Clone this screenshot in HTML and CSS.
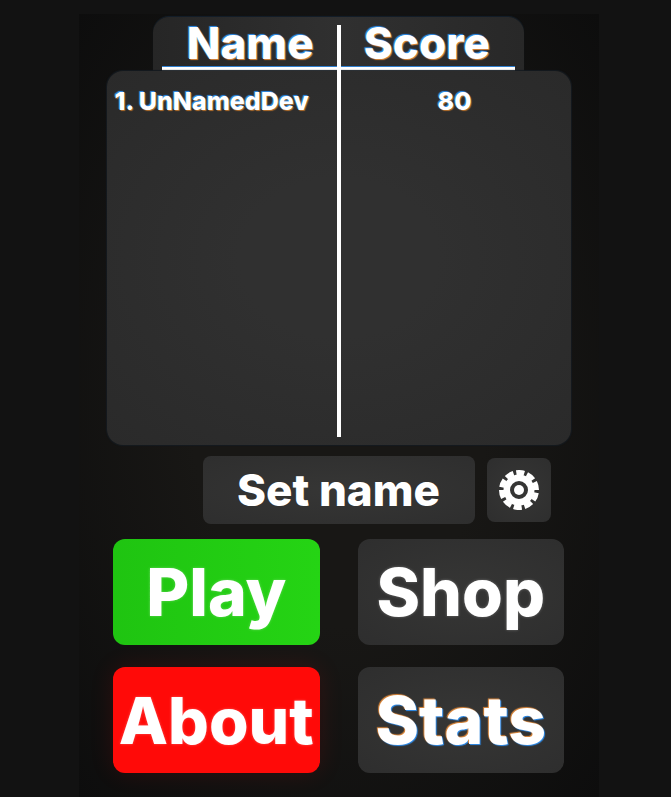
FILE: index.html
```
<!DOCTYPE html>
<html lang="en">
<head>
  <meta charset="UTF-8">
  <meta name="viewport" content="width=device-width, initial-scale=1.0">
  <title>Main Menu</title>
  <link rel="stylesheet" href="styles.css">
</head>
<body>
  <main class="stage">
    <div class="scoreboard">
      <table class="score-table">
        <thead>
          <tr>
            <th scope="col">Name</th>
            <th scope="col">Score</th>
          </tr>
        </thead>
        <tbody>
          <tr>
            <td>1. UnNamedDev</td>
            <td>80</td>
          </tr>
        </tbody>
      </table>
    </div>
    <div class="name-bar">
      <button class="btn btn-name" type="button">Set name</button>
      <button class="btn btn-settings" type="button" aria-label="Settings">
        <svg viewBox="-20 -20 40 40" width="40" height="40" fill="none" stroke="#fff">
          <circle r="17.5" stroke-width="5" pathLength="100" stroke-dasharray="7.4 2.6" transform="rotate(9)"/>
          <circle r="12.25" stroke-width="6.5"/>
          <circle r="5" fill="#fff" stroke="none"/>
        </svg>
      </button>
    </div>
    <div class="menu">
      <button class="btn btn-play" type="button">Play</button>
      <button class="btn btn-shop" type="button">Shop</button>
      <button class="btn btn-about" type="button">About</button>
      <button class="btn btn-stats" type="button">Stats</button>
    </div>
  </main>
</body>
</html>
```
FILE: styles.css
```
body {
  font-family: Inter, 'Liberation Sans', sans-serif;
  font-weight: 800;
  background-color: #121212;
  color: #fff;
  margin: 0;
  padding: 14px 0 0 6px;
  box-sizing: border-box;
  min-height: 100vh;
  display: flex;
  justify-content: center;
}

.stage {
  width: 100%;
  max-width: 520px;
  padding-top: 3px;
  box-sizing: border-box;
  background: radial-gradient(ellipse at center, #181715 40%, #0d0d0d 100%);
  display: flex;
  flex-direction: column;
  align-items: center;
}

/* Scoreboard */
.scoreboard {
  position: relative;
  width: 90%;
  max-width: 464px;
}

/* divider between the two columns */
.scoreboard::after {
  content: "";
  position: absolute;
  top: 8px;
  bottom: 8px;
  left: 50%;
  width: 4px;
  margin-left: -2px;
  background-color: #fff;
}

.score-table,
.score-table thead,
.score-table tbody {
  display: block;
}

.score-table tr {
  display: grid;
  grid-template-columns: 1fr 1fr;
}

.score-table thead {
  width: 80%;
  margin: 0 auto;
  padding: 0 9px;
  box-sizing: border-box;
  background: linear-gradient(90deg, #262626, #303030 50%, #282828);
  border-radius: 16px 16px 0 0;
  box-shadow: 0 -1px 1px #14202c;
}

.score-table thead tr {
  border-bottom: 4px solid #fff;
  box-shadow: 0 1px 0 #b5702c, inset 0 -1px 0 #2f7fd0;
}

.score-table th {
  padding: 3px 0 0;
  font-size: 44px;
  font-weight: 800;
  line-height: 47px;
  text-align: center;
  text-shadow: -1px -1px 1px #2f8ff0, 1px 1px 1px #e08a3c;
}

.score-table tbody {
  min-height: 374px;
  padding-top: 14px;
  box-sizing: border-box;
  background: radial-gradient(ellipse at center, #303030 30%, #2a2a2a 100%);
  border-radius: 16px;
  box-shadow: 0 0 1px 1px #141a20;
}

.score-table td {
  padding: 0;
  font-size: 25px;
  line-height: 32px;
  text-align: center;
  text-shadow: -1px -1px 1px #2f8ff0, 1px 1px 1px #b5702c;
}

.score-table td:first-child {
  padding-left: 8px;
  text-align: left;
  white-space: nowrap;
}

/* Buttons */
.btn {
  font: inherit;
  color: inherit;
  margin: 0;
  padding: 0;
  border: none;
  border-radius: 12px;
  background: radial-gradient(ellipse at center, #363635, #2e2e2e);
  cursor: pointer;
}

.name-bar {
  width: 90%;
  max-width: 464px;
  margin-top: 11px;
  padding-right: 20px;
  box-sizing: border-box;
  display: flex;
  justify-content: flex-end;
  align-items: center;
  gap: 12px;
}

.btn-name {
  width: 272px;
  height: 68px;
  border-radius: 8px;
  font-size: 44px;
}

.btn-settings {
  width: 64px;
  height: 64px;
  border-radius: 8px;
  display: flex;
  justify-content: center;
  align-items: center;
}

.menu {
  width: 87%;
  max-width: 451px;
  margin: 15px 0 24px;
  display: grid;
  grid-template-columns: 1fr 1fr;
  grid-auto-rows: 106px;
  gap: 22px 38px;
}

.menu .btn {
  font-size: 66px;
  text-shadow: 0 0 3px rgba(255, 255, 255, 0.3);
}

.menu .btn-play {
  background: linear-gradient(90deg, #1fc411, #25d414);
}

.menu .btn-about {
  font-size: 64px;
  background: #ff0a08;
  box-shadow: 0 0 24px rgba(255, 0, 0, 0.12);
}

.menu .btn-stats {
  text-shadow: -1px -1px 1px #e08a3c, 1px 1px 1px #2f8ff0;
}
```
